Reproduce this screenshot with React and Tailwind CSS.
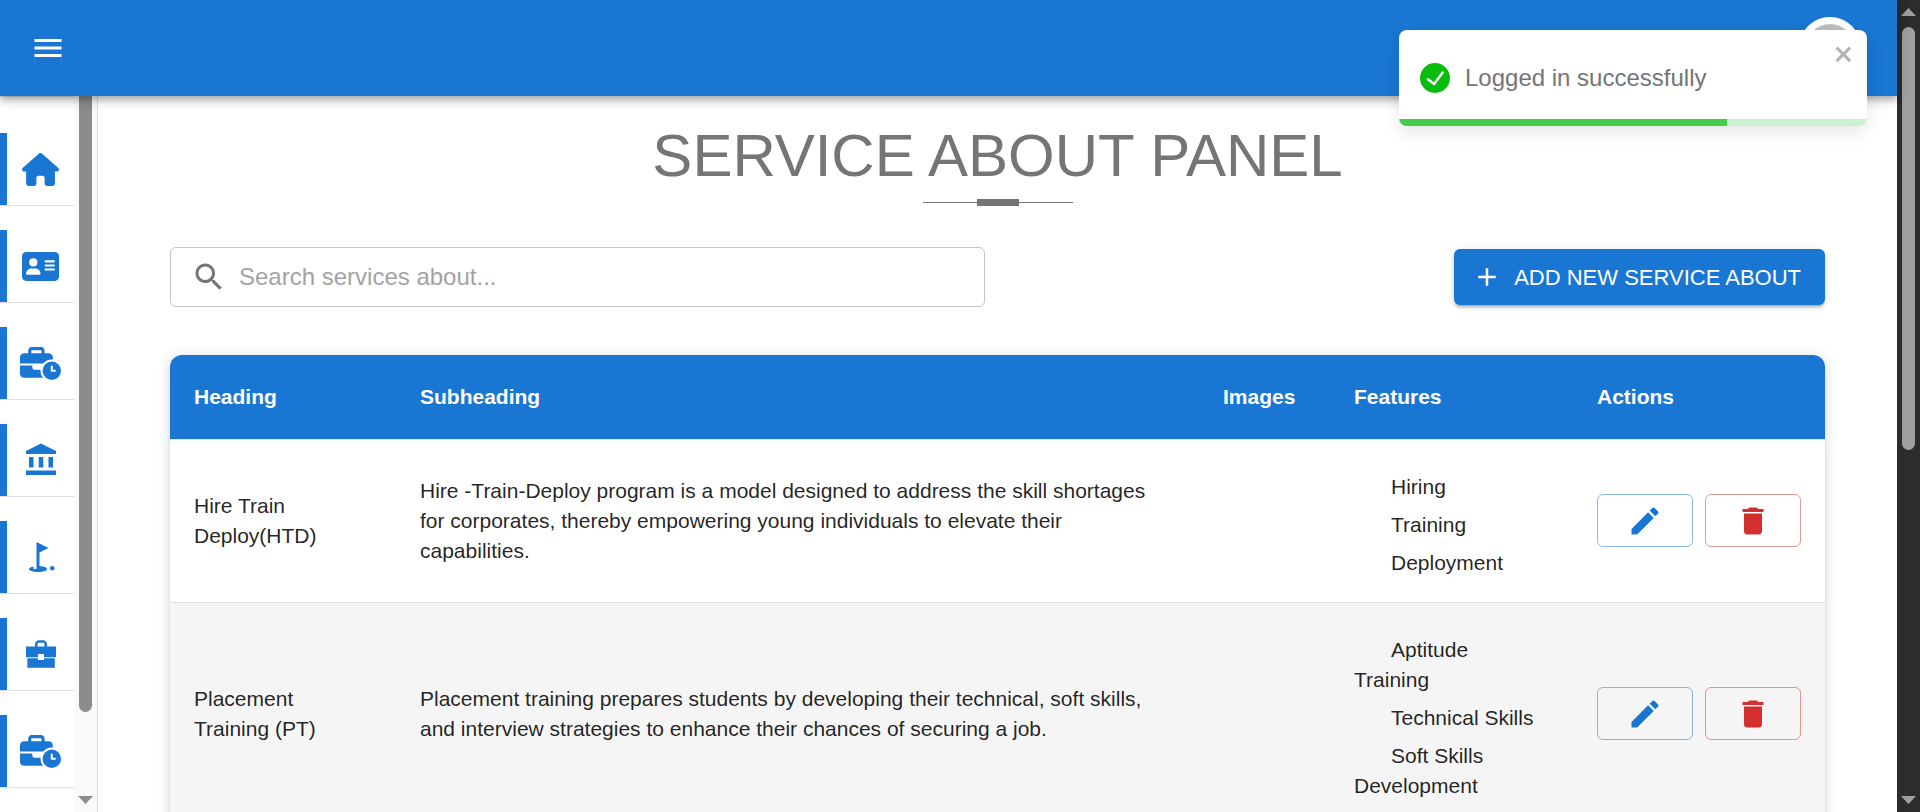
import React from "react";
import { FaHouse, FaAddressCard, FaBusinessTime } from "react-icons/fa6";

function Icon({ className, children }) {
  return (
    <svg viewBox="0 0 24 24" fill="currentColor" aria-hidden="true" className={className}>
      {children}
    </svg>
  );
}

const BankIcon = () => (
  <Icon className="size-9">
    <path d="M4 10h3v7H4zm6.5 0h3v7h-3zM2 19h20v3H2zm15-9h3v7h-3zm-5-9L2 6v2h20V6z" />
  </Icon>
);

const GolfIcon = () => (
  <Icon className="size-9">
    <circle cx="19.5" cy="19.5" r="1.5" />
    <path d="M17 5.92 9 2v18H7v-1.73c-1.79.35-3 .99-3 1.73 0 1.1 2.69 2 6 2s6-.9 6-2c0-.99-2.16-1.81-5-1.97V8.98z" />
  </Icon>
);

const BriefcaseIcon = () => (
  <Icon className="size-9">
    <path
      fillRule="evenodd"
      d="M2 7h6V5.500C8 4 9.200 2.800 10.700 2.800h2.600C14.800 2.800 16 4 16 5.500V7h6v7.200h-8V12h-4v2.200H2zM9.700 7h4.600V5.400c0-.5-.4-.9-.9-.9h-2.800c-.5 0-.9.4-.9.9zM2.900 14.900H10V16h4v-1.100h7.200v6.300H2.900z"
    />
  </Icon>
);

const navItems = [
  { label: "Home", icon: <FaHouse className="size-[37px]" /> },
  { label: "About", icon: <FaAddressCard className="size-[37px]" /> },
  { label: "Services", icon: <FaBusinessTime className="size-[41px]" /> },
  { label: "Institutions", icon: <BankIcon /> },
  { label: "Courses", icon: <GolfIcon /> },
  { label: "Careers", icon: <BriefcaseIcon /> },
  { label: "Service about", icon: <FaBusinessTime className="size-[41px]" /> },
];

const services = [
  {
    heading: "Hire Train Deploy(HTD)",
    subheading:
      "Hire -Train-Deploy program is a model designed to address the skill shortages for corporates, thereby empowering young individuals to elevate their capabilities.",
    features: ["Hiring", "Training", "Deployment"],
  },
  {
    heading: "Placement Training (PT)",
    subheading:
      "Placement training prepares students by developing their technical, soft skills, and interview strategies to enhance their chances of securing a job.",
    features: ["Aptitude Training", "Technical Skills", "Soft Skills Development"],
  },
];

function Arrow({ down, className }) {
  return (
    <svg viewBox="0 0 15 8" aria-hidden="true" className={className} fill="currentColor">
      <path d={down ? "M0 0h15L7.500 8z" : "M0 8h15L7.500 0z"} />
    </svg>
  );
}

function Header() {
  return (
    <header className="relative z-10 flex h-24 shrink-0 items-center justify-between bg-[#1976d2] pl-[30px] pr-9 text-white shadow-[0_3px_6px_-1px_rgba(0,0,0,0.2),0_6px_8px_0_rgba(0,0,0,0.14),0_1px_15px_0_rgba(0,0,0,0.12)]">
      <button type="button" aria-label="Open menu">
        <Icon className="size-9">
          <path d="M3 18h18v-2H3zm0-5h18v-2H3zm0-7v2h18V6z" />
        </Icon>
      </button>
      <button type="button" aria-label="Account" className="size-[62px] rounded-full bg-white p-[7px]">
        <span className="block size-full rounded-full bg-[#bdbdbd]" />
      </button>
    </header>
  );
}

function Sidebar() {
  return (
    <aside className="flex shrink-0 border-r border-[#e0e0e0]">
      <nav className="w-[74px] overflow-hidden border-t border-[#e0e0e0] pt-3">
        <ul>
          {navItems.map((item) => (
            <li key={item.label} className="mt-6 border-b border-[#e0e0e0]">
              <a
                href="#"
                aria-label={item.label}
                className="flex h-[72px] items-center justify-center border-l-[7px] border-[#1976d2] text-[#1976d2]"
              >
                {item.icon}
              </a>
            </li>
          ))}
        </ul>
      </nav>
      <div className="flex w-[23px] flex-col items-center justify-between bg-[#fafafa] pb-2">
        <div className="h-[87%] w-[13px] rounded-b-full bg-[#8b8b8b]" />
        <Arrow down className="h-2 w-[15px] text-[#8b8b8b]" />
      </div>
    </aside>
  );
}

function Row({ service }) {
  return (
    <tr className="border-t border-[#e0e0e0] even:bg-[#f5f5f5]">
      <td className="p-6">{service.heading}</td>
      <td className="p-6">{service.subheading}</td>
      <td className="p-6" />
      <td className="p-6">
        <ul className="pr-2">
          {service.features.map((feature) => (
            <li key={feature} className="mt-2 indent-[37px]">
              {feature}
            </li>
          ))}
        </ul>
      </td>
      <td className="p-6">
        <div className="flex gap-3">
          <button
            type="button"
            aria-label="Edit"
            className="flex h-[53px] flex-1 items-center justify-center rounded-md border border-[#1976d2]/50 text-[#1976d2]"
          >
            <Icon className="size-9">
              <path d="M3 17.250V21h3.750L17.810 9.940l-3.750-3.750zM20.710 7.040c.39-.39.39-1.020 0-1.410l-2.340-2.340a.996.996 0 0 0-1.410 0l-1.830 1.830 3.750 3.750z" />
            </Icon>
          </button>
          <button
            type="button"
            aria-label="Delete"
            className="flex h-[53px] flex-1 items-center justify-center rounded-md border border-[#d32f2f]/50 text-[#d32f2f]"
          >
            <Icon className="size-9">
              <path d="M6 19c0 1.100.9 2 2 2h8c1.100 0 2-.9 2-2V7H6zM19 4h-3.500l-1-1h-5l-1 1H5v2h14z" />
            </Icon>
          </button>
        </div>
      </td>
    </tr>
  );
}

function ServiceTable() {
  return (
    <div className="mt-12 overflow-hidden rounded-xl bg-white shadow-[0_3px_2px_-2px_rgba(0,0,0,0.2),0_2px_2px_0_rgba(0,0,0,0.14),0_2px_14px_0_rgba(0,0,0,0.16)]">
      <table className="w-full table-fixed border-collapse text-left text-[21px] leading-[30px] text-black/87">
        <colgroup>
          <col className="w-[226px]" />
          <col />
          <col className="w-[131px]" />
          <col className="w-[243px]" />
          <col className="w-[252px]" />
        </colgroup>
        <thead>
          <tr className="h-[84px] bg-[#1976d2] text-white">
            {["Heading", "Subheading", "Images", "Features", "Actions"].map((name) => (
              <th key={name} scope="col" className="px-6 font-bold">
                {name}
              </th>
            ))}
          </tr>
        </thead>
        <tbody>
          {services.map((service) => (
            <Row key={service.heading} service={service} />
          ))}
        </tbody>
      </table>
    </div>
  );
}

function Toast() {
  return (
    <div
      role="status"
      className="absolute right-[30px] top-[30px] z-20 flex h-24 w-[468px] items-center overflow-hidden rounded-lg bg-white pl-[21px] text-2xl text-[#757575] shadow-[0_6px_18px_rgba(0,0,0,0.1)]"
    >
      <svg viewBox="0 0 24 24" aria-hidden="true" className="mr-[15px] size-[30px] fill-[#07bc0c]">
        <path d="M12 0a12 12 0 1012 12A12.014 12.014 0 0012 0zm6.927 8.200l-6.845 9.289a1.011 1.011 0 01-1.430.188l-4.888-3.908a1 1 0 111.250-1.562l4.076 3.261 6.227-8.451a1 1 0 111.610 1.183z" />
      </svg>
      <p>Logged in successfully</p>
      <button type="button" aria-label="Close" className="absolute right-3 top-3 text-black/30">
        <svg viewBox="0 0 14 16" fill="currentColor" aria-hidden="true" className="h-6 w-[21px]">
          <path
            fillRule="evenodd"
            d="M7.710 8.230l3.750 3.750-1.480 1.480-3.750-3.750-3.750 3.750L1 11.980l3.750-3.750L1 4.480 2.480 3l3.750 3.750L9.980 3l1.480 1.480-3.750 3.750z"
          />
        </svg>
      </button>
      <div className="absolute inset-x-0 bottom-0 h-[7px] bg-[#cdf2ce]">
        <div className="h-full w-[70%] bg-[#45cd48]" />
      </div>
    </div>
  );
}

export default function App() {
  return (
    <div className="flex h-screen overflow-hidden bg-white font-['Liberation_Sans',Arial,sans-serif]">
      <div className="relative flex min-w-0 flex-1 flex-col">
        <Header />
        <Toast />
        <div className="flex min-h-0 flex-1">
          <Sidebar />
          <main className="min-w-0 flex-1 overflow-hidden px-[72px] pt-6">
            <h1 className="text-center text-[60px] leading-[72px] text-[#757575]">SERVICE ABOUT PANEL</h1>
            <div className="mt-[7px] flex items-center justify-center">
              <span className="h-px w-[54px] bg-[#757575]" />
              <span className="h-[7px] w-[42px] bg-[#757575]" />
              <span className="h-px w-[54px] bg-[#757575]" />
            </div>
            <div className="mt-[41px] flex items-center justify-between">
              <label className="flex h-[60px] w-[815px] items-center gap-3 rounded-md border border-[#c4c4c4] pl-5">
                <Icon className="size-9 text-[#757575]">
                  <path d="M15.500 14h-.79l-.28-.27C15.410 12.590 16 11.110 16 9.500 16 5.910 13.090 3 9.500 3S3 5.910 3 9.500 5.910 16 9.500 16c1.610 0 3.090-.59 4.230-1.570l.27.28v.79l5 4.990L20.490 19zm-6 0C7.010 14 5 11.990 5 9.500S7.010 5 9.500 5 14 7.010 14 9.500 11.990 14 9.500 14" />
                </Icon>
                <input
                  type="text"
                  aria-label="Search services about"
                  placeholder="Search services about..."
                  className="min-w-0 flex-1 bg-transparent text-2xl text-black/87 outline-none placeholder:text-[#a3a3a3]"
                />
              </label>
              <button
                type="button"
                className="flex h-14 items-center gap-3 rounded-md bg-[#1976d2] px-6 text-[22px] text-white shadow-[0_4px_2px_-3px_rgba(0,0,0,0.2),0_3px_3px_0_rgba(0,0,0,0.14),0_1px_7px_0_rgba(0,0,0,0.12)]"
              >
                <Icon className="-ml-1.5 size-[30px]">
                  <path d="M19 13h-6v6h-2v-6H5v-2h6V5h2v6h6z" />
                </Icon>
                ADD NEW SERVICE ABOUT
              </button>
            </div>
            <ServiceTable />
          </main>
        </div>
      </div>
      <div className="flex w-[23px] shrink-0 flex-col items-center bg-[#2c2c2c] py-2 text-[#9f9f9f]">
        <Arrow className="h-2 w-[15px]" />
        <div className="mt-[11px] flex w-full flex-1 justify-center">
          <div className="h-[55%] w-[13px] rounded-full bg-[#9f9f9f]" />
        </div>
        <Arrow down className="h-2 w-[15px]" />
      </div>
    </div>
  );
}
